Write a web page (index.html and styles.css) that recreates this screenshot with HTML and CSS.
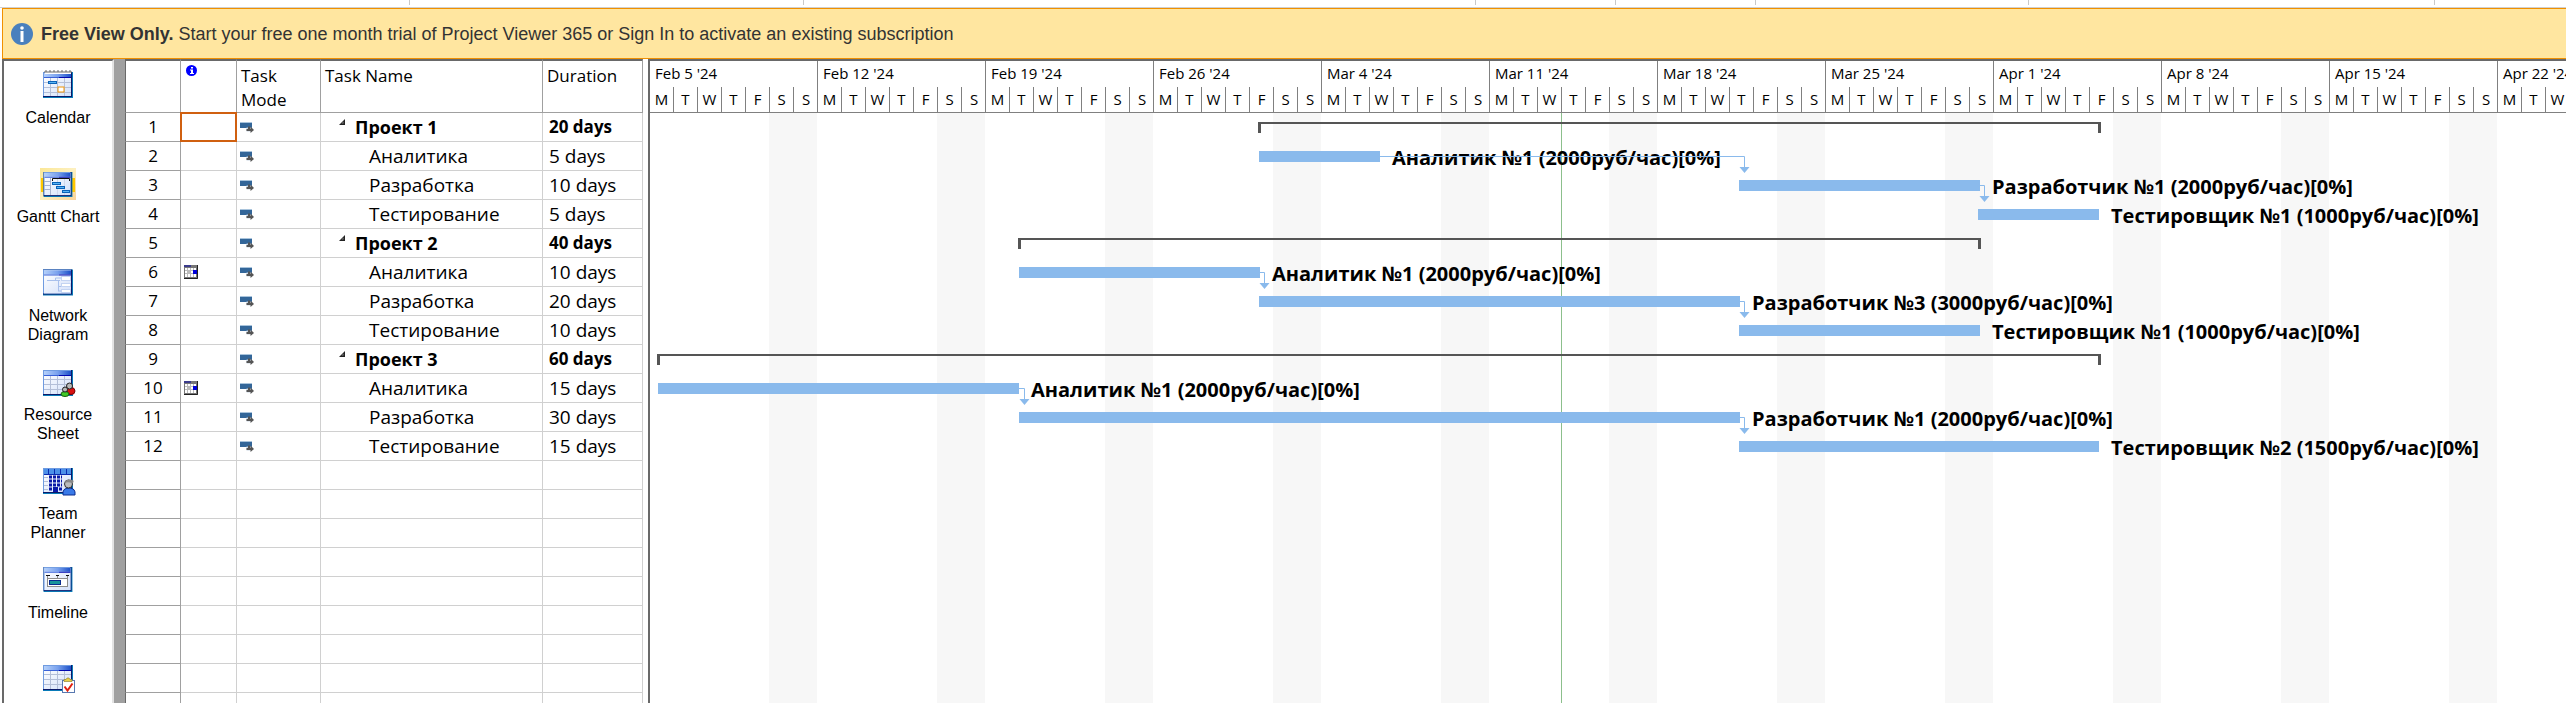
FILE: index.html
```html
<!DOCTYPE html>
<html lang="en">
<head>
<meta charset="utf-8">
<title>Project Viewer 365</title>
<link rel="stylesheet" href="styles.css">
</head>
<body>
<svg class="defs" aria-hidden="true">
  <defs>
    <linearGradient id="head" x1="0" x2="1" y1="0" y2="0">
      <stop offset="0" stop-color="#b4d0fa"/><stop offset=".5" stop-color="#7aa2ee"/><stop offset="1" stop-color="#1c50c8"/>
    </linearGradient>
    <linearGradient id="sheet" x1="0" x2="1" y1="0" y2="1">
      <stop offset="0" stop-color="#ffffff"/><stop offset="1" stop-color="#d3e0fa"/>
    </linearGradient>
    <linearGradient id="glow" x1="0" x2="1" y1="0" y2="1">
      <stop offset="0" stop-color="#fbe796"/><stop offset=".5" stop-color="#fdf0c0"/><stop offset="1" stop-color="#fbd49a"/>
    </linearGradient>
    <symbol id="window" viewBox="0 0 30 26">
      <rect width="30" height="26" fill="#0a7bb8"/>
      <rect width="29" height="25" fill="#0a1a6a"/>
      <rect width="28" height="24" fill="#6f9be0"/>
      <rect x="1" y="1" width="27" height="23" fill="url(#sheet)"/>
      <rect x="1" y="1" width="27" height="4" fill="url(#head)"/>
      <path d="M1 5.500H16" stroke="#3a62d8"/>
      <path d="M16 5.500H28" stroke="#0008b0"/>
    </symbol>
    <symbol id="mode" viewBox="0 0 14 11">
      <path d="M0 .5H12" stroke="#a9c4dc"/>
      <rect y="1" width="12" height="5" fill="#336699"/>
      <path d="M6.500 5.500h5v4h-5z" fill="#c8d4e0"/>
      <path d="M6.500 8H11M9 4.500V8" stroke="#555" stroke-width="2" fill="none"/>
      <path d="M10.500 4.500L14 8L10.500 11Z" fill="#555"/>
    </symbol>
    <symbol id="constraint" viewBox="0 0 14 14">
      <rect width="14" height="14" fill="#777"/>
      <rect x="1" y="3" width="11" height="9" fill="#fff"/>
      <rect width="7" height="2" fill="#3b3b8c"/>
      <rect x="3" y="5" width="4" height="4" fill="#bbb"/>
      <path d="M1 5.500h11M1 8.500h11M3.500 3v9M6.500 3v9M9.500 3v9" stroke="#bbb"/>
      <path d="M13.500 0v13.500H0" stroke="#222" fill="none"/>
      <rect x="9" y="5" width="4" height="4" fill="#0000d8"/>
    </symbol>
    <symbol id="fold" viewBox="0 0 6 6"><path d="M6 0V6H0Z" fill="#222"/><path d="M4.500 2.500V4.500H2.500Z" fill="#888"/></symbol>
  </defs>
</svg>

<div class="ribbon" aria-hidden="true"><i style="left:409px"></i><i style="left:803px"></i><i style="left:1475px"></i><i style="left:1615px"></i><i style="left:1755px"></i><i style="left:2028px"></i><i style="left:2434px"></i></div>

<div class="banner" role="status">
  <svg class="banner-icon" viewBox="0 0 22 22" aria-hidden="true"><circle cx="11" cy="11" r="11" fill="#4a80bd"/><circle cx="11" cy="5" r="1.800" fill="#fff"/><rect x="9.500" y="8" width="3" height="11" fill="#fff"/></svg>
  <p><b>Free View Only.</b> Start your free one month trial of Project Viewer 365 or Sign In to activate an existing subscription</p>
</div>

<main class="workspace">
  <nav class="views" aria-label="Views">
    <button class="view"><svg viewBox="0 0 36 32" aria-hidden="true">
      <use href="#window" x="3" y="4" width="30" height="26"/>
      <path d="M5 4.500H31" stroke="#fff" stroke-width="3"/>
      <path d="M5 5V3h2v2M9 5V3h2v2M13 5V3h2v2M17 5V3h2v2M21 5V3h2v2M25 5V3h2v2M29 5V3h2v2" stroke="#666" fill="none"/>
      <path d="M4 14.500H31M4 19.500H31M4 24.500H31M10.500 10V28M17.500 10V28M24.500 10V28" stroke="#b4bfd8"/>
      <rect x="8.500" y="13.500" width="8" height="2" fill="#5ab4f4" stroke="#0a62b8"/>
      <rect x="18" y="19" width="6" height="5" fill="#fff" stroke="#f0960a" stroke-width="1"/>
    </svg><span>Calendar</span></button>
    <button class="view" aria-current="true"><svg viewBox="0 0 36 32" aria-hidden="true">
      <rect width="36" height="32" y="1" fill="url(#glow)"/>
      <path d="M1 11v14h34v-14z" fill="#ffc800"/>
      <use href="#window" x="3" y="5" width="30" height="25"/>
      <path d="M4 14.500h6M4 18.500h6M4 22.500h6M10.500 11v17" stroke="#a8b4d0"/>
      <path d="M17.500 11v17M24.500 11v17" stroke="#d0d8ec"/>
      <path d="M12.500 14v-2.500h17V14" stroke="#111" fill="none"/>
      <g fill="#5ab4f4" stroke="#0a62b8"><rect x="12.500" y="15.500" width="8" height="2"/><rect x="16.500" y="19.500" width="8" height="2"/><rect x="22.500" y="23.500" width="7" height="2"/></g>
    </svg><span>Gantt Chart</span></button>
    <button class="view"><svg viewBox="0 0 36 32" aria-hidden="true">
      <use href="#window" x="3" y="3" width="30" height="27"/>
      <path d="M7 14.500H20M15.500 14v-2H21M18.500 14V25M18 20.500h3M18 25h3" stroke="#a8c0ec" fill="none"/>
      <g fill="#fff" stroke="#c4d4f2"><rect x="21.500" y="10.500" width="9" height="4"/><rect x="21.500" y="17.500" width="9" height="3"/><rect x="21.500" y="23.500" width="9" height="3"/></g>
    </svg><span>Network Diagram</span></button>
    <button class="view"><svg viewBox="0 0 36 32" aria-hidden="true">
      <use href="#window" x="3" y="5" width="30" height="26"/>
      <path d="M4 14.500H31M4 19.500H31M4 24.500H31M10.500 11V29M17.500 11V29M24.500 11V29" stroke="#b4bfd8"/>
      <ellipse cx="31" cy="26" rx="4" ry="3.500" fill="#d81010" stroke="#700"/><ellipse cx="25" cy="29" rx="4" ry="2.500" fill="#40c828" stroke="#175c0c"/>
      <circle cx="29.500" cy="21" r="3" fill="#b8b8b8" stroke="#222"/><circle cx="25" cy="24.500" r="2.500" fill="#b8b8b8" stroke="#222"/>
    </svg><span>Resource Sheet</span></button>
    <button class="view"><svg viewBox="0 0 36 32" aria-hidden="true">
      <use href="#window" x="3" y="4" width="30" height="26"/>
      <rect x="4" y="5" width="27" height="5" fill="#4c90e8"/><path d="M8.500 5v5M14.500 5v5M20.500 5v5M26.500 5v5M4 10.500h27" stroke="#0a2cb0"/>
      <path d="M4 13.500h4M4 17.500h4M4 21.500h4M4 25.500h4" stroke="#b4bfd8"/>
      <path d="M9 13h13M9 17h13M9 21h13M9 25h3M19 25h3" stroke="#0a18a8" stroke-width="3" stroke-dasharray="3 1"/>
      <path d="M13 28v-5h5v5" fill="#0a18a8"/>
      <path d="M23 31q-1-7 6-7t6 7z" fill="#3a7ae8" stroke="#0a2c90"/><circle cx="28.500" cy="20" r="4" fill="#bcbcbc" stroke="#333"/><path d="M24.500 19q1-4 6-3.500t2 4q-4-2-8-.5z" fill="#888"/>
    </svg><span>Team Planner</span></button>
    <button class="view"><svg viewBox="0 0 36 32" aria-hidden="true">
      <use href="#window" x="3" y="4" width="30" height="25"/>
      <path d="M6 12.500h4M16 12.500h3M26 12.500h3" stroke="#111"/>
      <rect x="7.500" y="15.500" width="20" height="8" fill="#fff" stroke="#8c8c8c"/><path d="M17.500 13v3M7.500 13v3M27.500 13v3" stroke="#8c8c8c"/>
      <rect x="9" y="17" width="12" height="5" fill="#0a2c90"/><rect x="10" y="18" width="10" height="3" fill="#18949c"/>
    </svg><span>Timeline</span></button>
    <button class="view" aria-label="Task Usage"><svg viewBox="0 0 36 32" aria-hidden="true">
      <use href="#window" x="3" y="3" width="30" height="26"/>
      <path d="M4 12.500H31M4 17.500H31M4 22.500H31M10.500 9V27M17.500 9V27M24.500 9V27" stroke="#b4bfd8"/>
      <rect x="22.500" y="18.500" width="12" height="12" fill="#fff" stroke="#5878b0"/><path d="M24 19.500h8v-2h-2l-1-1.500h-2l-1 1.500h-2z" fill="#e8d048" stroke="#8a7820" stroke-width=".6"/>
      <path d="M24.500 24.500l3 4l5-7" stroke="#e02010" stroke-width="2" fill="none"/>
    </svg></button>
  </nav>

  <table class="tasks">
    <colgroup><col class="c-id"><col class="c-info"><col class="c-mode"><col class="c-name"><col class="c-dur"></colgroup>
    <thead><tr><th></th><th class="info"><svg class="info-icon" viewBox="0 0 11 11" role="img" aria-label="Indicators"><circle cx="5.500" cy="5.500" r="5.500" fill="#0000ff"/><path d="M5 2h2v1.500H5zM4 4.500h3v3.500h1v1H4v-1h1V5.500H4z" fill="#fff"/></svg></th><th>Task<br>Mode</th><th>Task Name</th><th>Duration</th></tr></thead>
    <tbody>
      <tr class="sum"><th>1</th><td class="picked"></td><td><svg class="mode"><use href="#mode"/></svg></td><td><svg class="fold"><use href="#fold"/></svg>Проект 1</td><td>20 days</td></tr>
      <tr><th>2</th><td></td><td><svg class="mode"><use href="#mode"/></svg></td><td>Аналитика</td><td>5 days</td></tr>
      <tr><th>3</th><td></td><td><svg class="mode"><use href="#mode"/></svg></td><td>Разработка</td><td>10 days</td></tr>
      <tr><th>4</th><td></td><td><svg class="mode"><use href="#mode"/></svg></td><td>Тестирование</td><td>5 days</td></tr>
      <tr class="sum"><th>5</th><td></td><td><svg class="mode"><use href="#mode"/></svg></td><td><svg class="fold"><use href="#fold"/></svg>Проект 2</td><td>40 days</td></tr>
      <tr><th>6</th><td><svg class="constraint"><use href="#constraint"/></svg></td><td><svg class="mode"><use href="#mode"/></svg></td><td>Аналитика</td><td>10 days</td></tr>
      <tr><th>7</th><td></td><td><svg class="mode"><use href="#mode"/></svg></td><td>Разработка</td><td>20 days</td></tr>
      <tr><th>8</th><td></td><td><svg class="mode"><use href="#mode"/></svg></td><td>Тестирование</td><td>10 days</td></tr>
      <tr class="sum"><th>9</th><td></td><td><svg class="mode"><use href="#mode"/></svg></td><td><svg class="fold"><use href="#fold"/></svg>Проект 3</td><td>60 days</td></tr>
      <tr><th>10</th><td><svg class="constraint"><use href="#constraint"/></svg></td><td><svg class="mode"><use href="#mode"/></svg></td><td>Аналитика</td><td>15 days</td></tr>
      <tr><th>11</th><td></td><td><svg class="mode"><use href="#mode"/></svg></td><td>Разработка</td><td>30 days</td></tr>
      <tr><th>12</th><td></td><td><svg class="mode"><use href="#mode"/></svg></td><td>Тестирование</td><td>15 days</td></tr>
      <tr><th></th><td></td><td></td><td></td><td></td></tr>
      <tr><th></th><td></td><td></td><td></td><td></td></tr>
      <tr><th></th><td></td><td></td><td></td><td></td></tr>
      <tr><th></th><td></td><td></td><td></td><td></td></tr>
      <tr><th></th><td></td><td></td><td></td><td></td></tr>
      <tr><th></th><td></td><td></td><td></td><td></td></tr>
      <tr><th></th><td></td><td></td><td></td><td></td></tr>
      <tr><th></th><td></td><td></td><td></td><td></td></tr>
      <tr><th></th><td></td><td></td><td></td><td></td></tr>
    </tbody>
  </table>

  <section class="chart" aria-label="Gantt chart">
    <div class="scale">
      <div class="week"><b>Feb 5 '24</b><i>M</i><i>T</i><i>W</i><i>T</i><i>F</i><i>S</i><i>S</i></div>
      <div class="week"><b>Feb 12 '24</b><i>M</i><i>T</i><i>W</i><i>T</i><i>F</i><i>S</i><i>S</i></div>
      <div class="week"><b>Feb 19 '24</b><i>M</i><i>T</i><i>W</i><i>T</i><i>F</i><i>S</i><i>S</i></div>
      <div class="week"><b>Feb 26 '24</b><i>M</i><i>T</i><i>W</i><i>T</i><i>F</i><i>S</i><i>S</i></div>
      <div class="week"><b>Mar 4 '24</b><i>M</i><i>T</i><i>W</i><i>T</i><i>F</i><i>S</i><i>S</i></div>
      <div class="week"><b>Mar 11 '24</b><i>M</i><i>T</i><i>W</i><i>T</i><i>F</i><i>S</i><i>S</i></div>
      <div class="week"><b>Mar 18 '24</b><i>M</i><i>T</i><i>W</i><i>T</i><i>F</i><i>S</i><i>S</i></div>
      <div class="week"><b>Mar 25 '24</b><i>M</i><i>T</i><i>W</i><i>T</i><i>F</i><i>S</i><i>S</i></div>
      <div class="week"><b>Apr 1 '24</b><i>M</i><i>T</i><i>W</i><i>T</i><i>F</i><i>S</i><i>S</i></div>
      <div class="week"><b>Apr 8 '24</b><i>M</i><i>T</i><i>W</i><i>T</i><i>F</i><i>S</i><i>S</i></div>
      <div class="week"><b>Apr 15 '24</b><i>M</i><i>T</i><i>W</i><i>T</i><i>F</i><i>S</i><i>S</i></div>
      <div class="week"><b>Apr 22 '24</b><i>M</i><i>T</i><i>W</i></div>
    </div>
    <div class="plot">
      <div class="today"></div>
      <div class="lane"><div class="group" style="margin-left:608px;width:843px"></div></div>
      <div class="lane"><div class="bar" style="margin-left:609px;width:121px"></div><span>Аналитик №1 (2000руб/час)[0%]</span></div>
      <div class="lane"><div class="bar" style="margin-left:1089px;width:241px"></div><span>Разработчик №1 (2000руб/час)[0%]</span></div>
      <div class="lane"><div class="bar" style="margin-left:1328px;width:121px"></div><span>Тестировщик №1 (1000руб/час)[0%]</span></div>
      <div class="lane"><div class="group" style="margin-left:368px;width:963px"></div></div>
      <div class="lane"><div class="bar" style="margin-left:369px;width:241px"></div><span>Аналитик №1 (2000руб/час)[0%]</span></div>
      <div class="lane"><div class="bar" style="margin-left:609px;width:481px"></div><span>Разработчик №3 (3000руб/час)[0%]</span></div>
      <div class="lane"><div class="bar" style="margin-left:1089px;width:241px"></div><span>Тестировщик №1 (1000руб/час)[0%]</span></div>
      <div class="lane"><div class="group" style="margin-left:7px;width:1444px"></div></div>
      <div class="lane"><div class="bar" style="margin-left:8px;width:361px"></div><span>Аналитик №1 (2000руб/час)[0%]</span></div>
      <div class="lane"><div class="bar" style="margin-left:369px;width:721px"></div><span>Разработчик №1 (2000руб/час)[0%]</span></div>
      <div class="lane"><div class="bar" style="margin-left:1089px;width:360px"></div><span>Тестировщик №2 (1500руб/час)[0%]</span></div>
      <svg class="links" aria-hidden="true">
        <g fill="none" stroke="#8abaec">
          <path d="M730 43.500H1094.500V55"/><path d="M1330 72.500H1334.500V84"/>
          <path d="M610 159.500H614.500V171"/><path d="M1090 188.500H1094.500V200"/>
          <path d="M369 275.500H374.500V287"/><path d="M1090 304.500H1094.500V316"/>
        </g>
        <g fill="#8abaec">
          <path d="M1089.500 54h10l-5 6z"/><path d="M1329.500 83h10l-5 6z"/>
          <path d="M609.500 170h10l-5 6z"/><path d="M1089.500 199h10l-5 6z"/>
          <path d="M369.500 286h10l-5 6z"/><path d="M1089.500 315h10l-5 6z"/>
        </g>
      </svg>
    </div>
  </section>
</main>
</body>
</html>
```
FILE: styles.css
```css
* { box-sizing: border-box; }
html, body { height: 100%; }
body {
  margin: 0;
  display: flex;
  flex-direction: column;
  overflow: hidden;
  background: #fff;
  color: #000;
  font: 17px/24px "Open Sans", "Noto Sans", sans-serif;
}
p { margin: 0; }
.defs { position: absolute; width: 0; height: 0; }

.ribbon { flex: none; position: relative; height: 8px; border-bottom: 1px solid #d0d0d0; }
.ribbon i { position: absolute; top: 0; width: 1px; height: 5px; background: #c8c8c8; }

.banner {
  flex: none;
  display: flex;
  align-items: center;
  gap: 8px;
  height: 51px;
  margin-left: 2px;
  padding-left: 8px;
  border: 1px solid #f09000;
  border-right: 0;
  background: #ffe6a0;
  color: #333;
  font: 18px/20px "Liberation Sans", Arial, sans-serif;
}
.banner-icon { width: 22px; height: 22px; }

.workspace { flex: 1; display: flex; min-height: 0; margin-left: 2px; }

.views {
  flex: none;
  width: 112px;
  padding-top: 7px;
  display: flex;
  flex-direction: column;
  overflow: hidden;
  border: solid #696969;
  border-width: 2px 0 0 2px;
  border-right: 2px solid #e3e3e3;
}
.view {
  flex: none;
  display: flex;
  flex-direction: column;
  align-items: center;
  gap: 8px;
  height: 99px;
  padding: 0 12px;
  border: 0;
  background: none;
  color: #000;
  font: 16px/19px "Liberation Sans", Arial, sans-serif;
}
.view svg { flex: none; width: 36px; height: 32px; overflow: visible; }

.tasks {
  flex: none;
  align-self: flex-start;
  width: 529px;
  border-left: 11px solid #a0a0a0;
  border-collapse: separate;
  border-spacing: 0;
  table-layout: fixed;
}
.c-id, .c-info { width: 56px; }
.c-mode { width: 84px; }
.c-name { width: 222px; }
.c-dur { width: 100px; }
.tasks th, .tasks td {
  height: 29px;
  padding: 0;
  overflow: hidden;
  border: solid #d0d0d0;
  border-width: 0 1px 1px 0;
  font-weight: 400;
  text-align: left;
  white-space: nowrap;
}
.tasks tbody th { border-color: #a0a0a0; text-align: center; }
.tasks tbody tr > :first-child, .tasks thead tr > :first-child { border-left: 1px solid #696969; }
.tasks thead th {
  height: 54px;
  padding: 3px 4px 0;
  border-top: 2px solid #696969;
  border-right-color: #a0a0a0;
  border-bottom-color: #a0a0a0;
  line-height: 24px;
  vertical-align: top;
}
.tasks thead .info { padding-top: 4px; }
.tasks td { font-size: 19px; }
.tasks td:nth-child(2), .tasks td:nth-child(3) { padding-left: 3px; }
.tasks td:nth-child(4) { padding: 0 0 1px 48px; }
.tasks td:nth-child(5) { padding: 0 0 1px 6px; }
.tasks .sum td { font-size: 17px; font-weight: 700; }
.tasks .sum td:nth-child(4) { padding-left: 18px; font-size: 18px; }
.tasks .picked { position: relative; overflow: visible; }
.picked::after { content: ""; position: absolute; inset: -1px; border: 2px solid #d06010; }
.info-icon { display: block; width: 11px; height: 11px; margin-left: 1px; }
.mode { display: block; width: 14px; height: 11px; }
.constraint { display: block; width: 14px; height: 14px; }
.fold { width: 6px; height: 6px; margin-right: 10px; vertical-align: 9px; }

.chart {
  flex: 1;
  min-width: 0;
  display: flex;
  flex-direction: column;
  margin-left: 5px;
  overflow: hidden;
  border: solid #696969;
  border-width: 2px 0 0 2px;
}
.scale { flex: none; display: flex; border-bottom: 1px solid #808080; }
.week {
  flex: none;
  display: grid;
  grid-template: 26px 25px / repeat(7, 24px);
  border-right: 1px solid #808080;
  width: 168px;
  font-size: 15px;
}
.week b { grid-column: 1 / -1; padding-left: 5px; font-weight: 400; }
.week i { border-right: 1px solid #808080; font-style: normal; text-align: center; }
.week i:nth-child(8) { border-right: 0; }

.plot {
  flex: 1;
  position: relative;
  background: repeating-linear-gradient(90deg, transparent 0 119px, #f7f7f7 119px 167px, transparent 167px 168px);
}
.lane { display: flex; height: 29px; position: relative; }
.bar { flex: none; height: 11px; margin-top: 9px; background: #8abaec; }
.group { flex: none; height: 11px; margin-top: 9px; border: solid #555; border-width: 2px 3px 0; }
.lane span { margin: 4px 0 0 12px; font-size: 20px; font-weight: 700; white-space: nowrap; }
.today { position: absolute; left: 911px; top: 0; bottom: 0; width: 1px; background: #8cbf8c; }
.links { position: absolute; left: 0; top: 0; width: 100%; height: 100%; }
```
